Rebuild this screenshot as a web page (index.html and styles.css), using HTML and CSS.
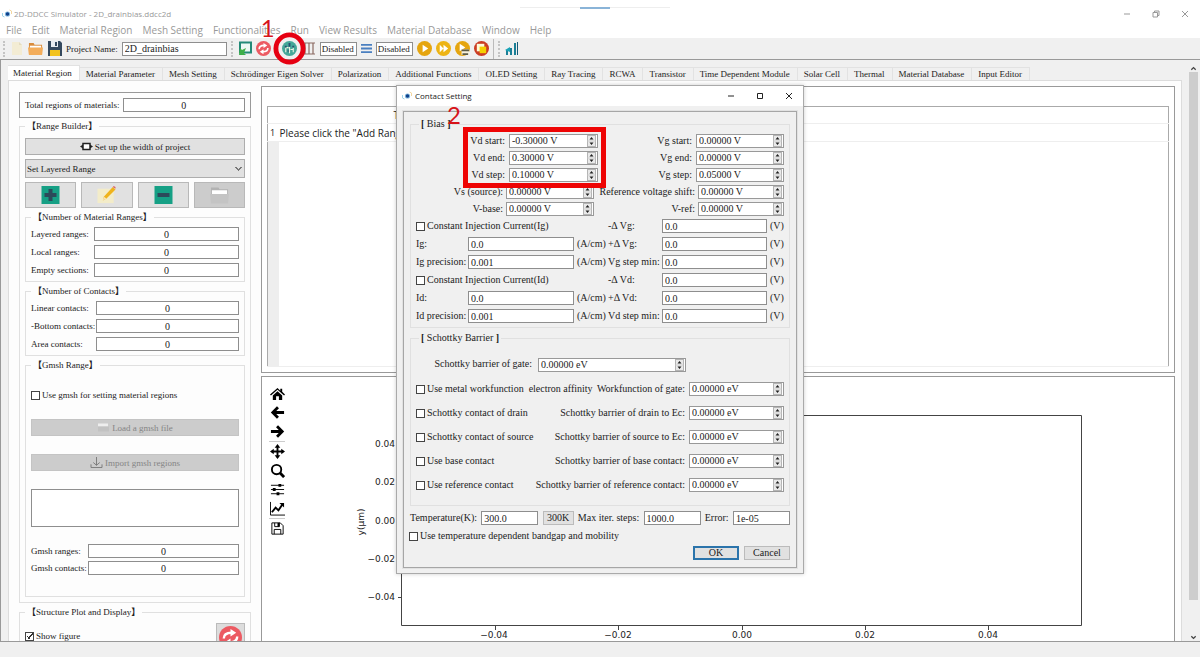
FILE: index.html
```html
<!DOCTYPE html>
<html lang="en">
<head>
<meta charset="utf-8">
<title>2D-DDCC Simulator</title>
<link rel="stylesheet" href="styles.css">
</head>
<body>
<svg class="defs" aria-hidden="true">
  <symbol id="logo" viewBox="0 0 12 10"><path d="M1 4v3l2 1" fill="none" stroke="#9fd4e8"/><circle cx="6" cy="5" r="2.6" fill="#7fb6dc"/><circle cx="6" cy="5" r="1.7" fill="#10408a"/><path d="M8 1l2 1v3" fill="none" stroke="#f3d7a0"/></symbol>
  <symbol id="spin" viewBox="0 0 9 12"><rect x=".5" y=".5" width="8" height="11" fill="#e9e9e9" stroke="#b4b4b4"/><path d="M.5 6h8" stroke="#d0d0d0"/><path d="M2.5 4.5l2-2.5 2 2.5zM2.5 7.500l2 2.500 2-2.500z" fill="#222"/></symbol>
  <symbol id="refresh" viewBox="0 0 24 24"><circle cx="12" cy="12" r="12" fill="#ec5a62"/><path d="M5 13c0-4 3-6 8-6M19 11c0 4-3 6-8 6" fill="none" stroke="#fff" stroke-width="2.500"/><path d="M12 3l6 4-6 4zM12 13l-6 4 6 4z" fill="#fff"/></symbol>
  <symbol id="folder" viewBox="0 0 16 14"><path d="M1 13V1h5l1 2h8v10z" fill="#d98b3a"/><path d="M2 4h12v3H2z" fill="#fff"/><path d="M0 6h16l-1 8H1z" fill="#f3ad5b"/></symbol>
</svg>

<header class="titlebar">
  <div class="caption"><svg class="logo"><use href="#logo"/></svg><span>2D-DDCC Simulator - 2D_drainbias.ddcc2d</span></div>
  <div class="grip"><span></span></div>
  <div class="window-buttons">
    <button aria-label="Minimize"><svg viewBox="0 0 8 8"><path d="M1 4h6"/></svg></button>
    <button aria-label="Restore"><svg viewBox="0 0 8 8"><path d="M1 2.500h4.500V7H1zM2.500 2.500V1H7v4.500H5.500"/></svg></button>
    <button aria-label="Close"><svg viewBox="0 0 8 8"><path d="M1 1l6 6M7 1L1 7"/></svg></button>
  </div>
</header>

<nav class="menubar">
  <button>File</button><button>Edit</button><button>Material Region</button><button>Mesh Setting</button><button>Functionalities</button><button>Run</button><button>View Results</button><button>Material Database</button><button>Window</button><button>Help</button>
</nav>

<div class="toolbar">
  <span class="handle"></span>
  <button aria-label="New"><svg viewBox="0 0 15 15"><path d="M3 1h7l3 3v10H3z" fill="#f3ecd4"/><path d="M10 1v3h3z" fill="#e4dcc0"/></svg></button>
  <button aria-label="Open"><svg viewBox="0 0 16 14"><use href="#folder"/></svg></button>
  <button aria-label="Save"><svg viewBox="0 0 15 15"><path d="M1 0h12l2 2v13H1z" fill="#34495e"/><path d="M4 0h7v6H4z" fill="#e8ecf0"/><path d="M8 1h2v4H8z" fill="#34495e"/><path d="M3 9h10v6H3z" fill="#f2c21c"/></svg></button>
  <label for="project">Project Name:</label>
  <input id="project" class="project" value="2D_drainbias">
  <span class="handle"></span>
  <button aria-label="Load region"><svg viewBox="0 0 15 15"><rect x="3" y="1.500" width="11" height="10" fill="#eef8f4" stroke="#238a78" stroke-width="2"/><path d="M2 14l1-7 2 2 4-2-2 5 2 2z" fill="#3fae49"/></svg></button>
  <button aria-label="Refresh"><svg viewBox="0 0 24 24"><use href="#refresh"/></svg></button>
  <button aria-label="Contact setting" class="contact"><svg viewBox="0 0 16 16"><circle cx="8" cy="8" r="8" fill="#45a899"/><path d="M4 12V7M8 13V6M12 12V7M4 7h3M9 9h3" stroke="#e8f2e0" stroke-width="1.200" fill="none"/><path d="M7 2h2v4H7zM3 5h2v2H3zM11 5h2v2h-2zM6 9h1v3H6z" fill="#284e70"/></svg>
    <svg class="ring" viewBox="0 0 34 34"><circle cx="17" cy="17" r="14" fill="none" stroke="#e60012" stroke-width="5"/></svg><span class="step step-one">1</span></button>
  <button aria-label="Boundary"><svg viewBox="0 0 15 15"><path d="M2 2h12M2 13h12M4 2v11M8 2v11M12 2v11" stroke="#8b6a62" stroke-width="1.200"/></svg></button>
  <input class="state" aria-label="Boundary state" value="Disabled">
  <button aria-label="Layers"><svg class="narrow" viewBox="2 0 12 15"><path d="M2 3.500h12M2 7.500h12M2 11.500h12" stroke="#4a7fc0" stroke-width="2"/></svg></button>
  <input class="state" aria-label="Layer state" value="Disabled">
  <button aria-label="Run"><svg viewBox="0 0 16 16"><circle cx="8" cy="8" r="8" fill="#e5a50f"/><path d="M6 4l6 4-6 4z" fill="#fff"/></svg></button>
  <button aria-label="Run all"><svg viewBox="0 0 16 16"><circle cx="8" cy="8" r="8" fill="#edb414"/><path d="M4 4l4 4-4 4zM8 4l5 4-5 4z" fill="#fff"/></svg></button>
  <button aria-label="Run and save"><svg viewBox="0 0 16 16"><circle cx="8" cy="8" r="8" fill="#e5a50f"/><path d="M5 3l6 4-6 4z" fill="#fff"/><path d="M7 9h8v6H7z" fill="#f7f1dc"/><path d="M7 9h8v2H7zM8 13h6v2H8z" fill="#5c5b45"/></svg></button>
  <button aria-label="Stop"><svg viewBox="0 0 16 16"><circle cx="8" cy="8" r="8" fill="#cb3d24"/><path d="M3 3h8v8H3z" fill="#fffbd8"/><path d="M6 6h7v7H6z" fill="#f5d000"/></svg></button>
  <span class="divider"></span>
  <span class="handle"></span>
  <button aria-label="Plot"><svg viewBox="0 0 15 15"><path d="M2 14V9h2v5zM6 14V7h2v7zM10 14V2h2v12z" fill="#1b7f96"/><path d="M13 14V1h1v13z" fill="#155a78"/><path d="M1 9l5-3v5z" fill="#19a3b8"/></svg></button>
</div>

<main class="workspace">
  <div class="content">
    <div class="tabs" role="tablist">
      <button class="active">Material Region</button><button>Material Parameter</button><button>Mesh Setting</button><button>Schrödinger Eigen Solver</button><button>Polarization</button><button>Additional Functions</button><button>OLED Setting</button><button>Ray Tracing</button><button>RCWA</button><button>Transistor</button><button>Time Dependent Module</button><button>Solar Cell</button><button>Thermal</button><button>Material Database</button><button>Input Editor</button>
    </div>
    <div class="pane">
      <aside class="sidebar">
        <div class="total"><label for="total">Total regions of materials:</label><input id="total" value="0"></div>
        <fieldset class="builder">
          <legend><b>【</b>Range Builder<b>】</b></legend>
          <button class="push"><svg class="wide-icon" viewBox="0 0 13 8"><rect x="3" y="1" width="7" height="6" fill="#fff" stroke="#222" stroke-width="1.500"/><path d="M0 4l3-2v4zM13 4l-3-2v4z" fill="#222"/></svg>Set up the width of project</button>
          <select aria-label="Range type"><option>Set Layered Range</option></select>
          <div class="actions">
            <button aria-label="Add"><svg viewBox="0 0 18 18"><path d="M0 0h18v18H0z" fill="#16a085"/><path d="M7 3h4v4h4v4h-4v4H7v-4H3V7h4z" fill="#2c4a5a"/></svg></button>
            <button aria-label="Edit"><svg viewBox="0 0 20 20"><path d="M0 3h18v16H0z" fill="#f3ecc9"/><path d="M6 16l1-4L17 1l3 3L10 14z" fill="#efb31c"/><path d="M6 16l1-4 3 2z" fill="#f7e3b5"/><path d="M17 1l1-1 2 1v2z" fill="#d9646c"/></svg></button>
            <button aria-label="Remove"><svg viewBox="0 0 18 18"><path d="M0 0h18v18H0z" fill="#16a085"/><path d="M3 7h12v4H3z" fill="#2c4a5a"/></svg></button>
            <button aria-label="Folder" class="off" disabled><svg viewBox="0 0 20 18"><path d="M1 9V1h8l1 2h9v6z" fill="#b2b2b2"/><path d="M2 4h16v5H2z" fill="#fff"/><path d="M0 8h20l-1 10H1z" fill="#c4c4c4"/></svg></button>
          </div>
          <fieldset class="counts">
            <legend><b>【</b>Number of Material Ranges<b>】</b></legend>
            <label for="c1">Layered ranges:</label><input id="c1" value="0">
            <label for="c2">Local ranges:</label><input id="c2" value="0">
            <label for="c3">Empty sections:</label><input id="c3" value="0">
          </fieldset>
          <fieldset class="counts contacts">
            <legend><b>【</b>Number of Contacts<b>】</b></legend>
            <label for="c4">Linear contacts:</label><input id="c4" value="0">
            <label for="c5">-Bottom contacts:</label><input id="c5" value="0">
            <label for="c6">Area contacts:</label><input id="c6" value="0">
          </fieldset>
          <fieldset class="gmsh">
            <legend><b>【</b>Gmsh Range<b>】</b></legend>
            <label class="check"><input type="checkbox">Use gmsh for setting material regions</label>
            <button class="push off" disabled><svg class="wide-icon" viewBox="0 0 13 10"><path d="M1 1h10v3H1z" fill="#eee"/><path d="M1 4h11v5H1z" fill="#c2c2c2"/></svg>Load a gmsh file</button>
            <button class="push off" disabled><svg class="wide-icon" viewBox="0 0 13 12"><path d="M.5 8v3.500h12V8M6.500 0v9M3 6l3.500 3L10 6" fill="none" stroke="#777"/></svg>Import gmsh regions</button>
            <textarea aria-label="Gmsh regions"></textarea>
            <div class="counts-grid">
              <label for="c7">Gmsh ranges:</label><input id="c7" value="0">
              <label for="c8">Gmsh contacts:</label><input id="c8" value="0">
            </div>
          </fieldset>
        </fieldset>
        <fieldset class="structure">
          <legend><b>【</b>Structure Plot and Display<b>】</b></legend>
          <label class="check"><input type="checkbox" checked>Show figure</label>
          <button aria-label="Redraw figure"><svg viewBox="0 0 24 24"><use href="#refresh"/></svg></button>
        </fieldset>
      </aside>

      <section class="views">
        <div class="frame table-frame">
          <table>
            <thead><tr><th></th><th class="head">T</th></tr></thead>
            <tbody><tr><th>1</th><td>Please click the "Add Range</td></tr><tr class="rest"><th></th><td></td></tr></tbody>
          </table>
        </div>
        <div class="frame plot-frame">
          <div class="plot-tools">
            <button aria-label="Home"><svg viewBox="0 0 16 16"><path d="M8 2L0 9l1 1 7-6 7 6 1-1-3-3V3h-2v2z"/><path d="M3 10l5-4.500L13 10v5H9.500v-4h-3v4H3z"/></svg></button>
            <button aria-label="Back"><svg viewBox="0 0 16 16"><path d="M15 8H3M8.500 2.500L3 8l5.500 5.500" class="thick"/></svg></button>
            <button aria-label="Forward"><svg viewBox="0 0 16 16"><path d="M1 8h12M7.500 2.500L13 8l-5.500 5.500" class="thick"/></svg></button>
            <hr>
            <button aria-label="Pan"><svg viewBox="0 0 16 16"><path d="M8 2v12M2 8h12" class="mid"/><path d="M8 0l3 4H5zM8 16l3-4H5zM0 8l4-3v6zM16 8l-4-3v6z"/></svg></button>
            <button aria-label="Zoom"><svg viewBox="0 0 16 16"><circle cx="7" cy="7" r="5" class="mid"/><path d="M10.500 10.500L15 15" class="thick"/></svg></button>
            <button aria-label="Subplots"><svg viewBox="0 0 16 16"><path d="M1 3.500h14M1 8h14M1 12.500h14" class="thin"/><path d="M9 2h3v3H9zM3 6.500h3v3H3zM7 11h3v3H7z"/></svg></button>
            <button aria-label="Axes"><svg viewBox="0 0 16 16"><path d="M.5 1v14H16" class="thin"/><path d="M2 12l4-5 3 3 4-6" class="mid"/><path d="M10 2h5v5z"/></svg></button>
            <hr>
            <button aria-label="Save figure"><svg viewBox="0 0 16 16"><path d="M2 2h9l3 3v9H2zM4.500 14V9h7v5M5 2v4h5V2" class="thin"/><path d="M8 2h2v4H8z"/></svg></button>
          </div>
          <svg class="plot" viewBox="0 0 884 264" preserveAspectRatio="xMinYMin meet">
            <path d="M111.500 38.500h680v210h-680z" fill="none" stroke="#444"/>
            <path d="M108 67.500h4M108 106.500h4M108 144.500h4M108 182.500h4M108 220.500h4M205.500 249v4M328.500 249v4M452.500 249v4M575.500 249v4M698.500 249v4" stroke="#444"/>
            <g text-anchor="end"><text x="105" y="70">0.04</text><text x="105" y="108">0.02</text><text x="105" y="147">0.00</text><text x="105" y="185">−0.02</text><text x="105" y="223">−0.04</text></g>
            <g text-anchor="middle"><text x="204" y="261">−0.04</text><text x="328" y="261">−0.02</text><text x="452" y="261">0.00</text><text x="575" y="261">0.02</text><text x="698" y="261">0.04</text><text transform="translate(74 145) rotate(-90)">y(μm)</text></g>
          </svg>
        </div>
      </section>
    </div>
  </div>
  <div class="scrollbar"><svg viewBox="0 0 8 8"><path d="M1.500 5.500L4 3l2.500 2.500"/></svg><span></span><svg viewBox="0 0 8 8"><path d="M1.500 2.500L4 5l2.500-2.500"/></svg></div>
</main>
<footer class="statusbar"></footer>

<div class="dialog" role="dialog" aria-label="Contact Setting">
  <div class="dialog-title">
    <svg class="logo"><use href="#logo"/></svg><span>Contact Setting</span>
    <div class="window-buttons">
      <button aria-label="Minimize"><svg viewBox="0 0 8 8"><path d="M1 4h6"/></svg></button>
      <button aria-label="Maximize"><svg viewBox="0 0 8 8"><path d="M1.500 1.500h5v5h-5z"/></svg></button>
      <button aria-label="Close"><svg viewBox="0 0 8 8"><path d="M1 1l6 6M7 1L1 7"/></svg></button>
    </div>
  </div>
  <form class="dialog-body">
    <fieldset class="bias">
      <legend><b>[</b> Bias <b>]</b></legend>
      <div class="spins">
        <label for="vds">Vd start:</label><span class="spin"><input id="vds" value="-0.30000 V"><svg><use href="#spin"/></svg></span>
        <label for="vgs">Vg start:</label><span class="spin"><input id="vgs" value="0.00000 V"><svg><use href="#spin"/></svg></span>
        <label for="vde">Vd end:</label><span class="spin"><input id="vde" value="0.30000 V"><svg><use href="#spin"/></svg></span>
        <label for="vge">Vg end:</label><span class="spin"><input id="vge" value="0.00000 V"><svg><use href="#spin"/></svg></span>
        <label for="vdp">Vd step:</label><span class="spin"><input id="vdp" value="0.10000 V"><svg><use href="#spin"/></svg></span>
        <label for="vgp">Vg step:</label><span class="spin"><input id="vgp" value="0.05000 V"><svg><use href="#spin"/></svg></span>
      </div>
      <div class="spins source">
        <label for="vs">Vs (source):</label><span class="spin"><input id="vs" value="0.00000 V"><svg><use href="#spin"/></svg></span>
        <label for="rvs">Reference voltage shift:</label><span class="spin"><input id="rvs" value="0.00000 V"><svg><use href="#spin"/></svg></span>
        <label for="vb">V-base:</label><span class="spin"><input id="vb" value="0.00000 V"><svg><use href="#spin"/></svg></span>
        <label for="vr">V-ref:</label><span class="spin"><input id="vr" value="0.00000 V"><svg><use href="#spin"/></svg></span>
      </div>
      <div class="currents">
        <label class="check wide"><input type="checkbox">Constant Injection Current(Ig)</label>
        <label for="mg">-Δ Vg:</label><input id="mg" value="0.0"><span>(V)</span>
        <label for="ig">Ig:</label><input id="ig" value="0.0"><span>(A/cm)</span>
        <label for="pg">+Δ Vg:</label><input id="pg" value="0.0"><span>(V)</span>
        <label for="igp">Ig precision:</label><input id="igp" value="0.001"><span>(A/cm)</span>
        <label for="gm">Vg step min:</label><input id="gm" value="0.0"><span>(V)</span>
        <label class="check wide"><input type="checkbox">Constant Injection Current(Id)</label>
        <label for="md">-Δ Vd:</label><input id="md" value="0.0"><span>(V)</span>
        <label for="idc">Id:</label><input id="idc" value="0.0"><span>(A/cm)</span>
        <label for="pd">+Δ Vd:</label><input id="pd" value="0.0"><span>(V)</span>
        <label for="idp">Id precision:</label><input id="idp" value="0.001"><span>(A/cm)</span>
        <label for="dm">Vd step min:</label><input id="dm" value="0.0"><span>(V)</span>
      </div>
    </fieldset>
    <fieldset class="barrier">
      <legend><b>[</b> Schottky Barrier <b>]</b></legend>
      <div class="gate"><label for="sg">Schottky barrier of gate:</label><span class="spin"><input id="sg" value="0.00000 eV"><svg><use href="#spin"/></svg></span></div>
      <div class="barrier-row"><label class="check"><input type="checkbox">Use metal workfunction&nbsp; electron affinity</label><label for="b1">Workfunction of gate:</label><span class="spin"><input id="b1" value="0.00000 eV"><svg><use href="#spin"/></svg></span></div>
      <div class="barrier-row"><label class="check"><input type="checkbox">Schottky contact of drain</label><label for="b2">Schottky barrier of drain to Ec:</label><span class="spin"><input id="b2" value="0.00000 eV"><svg><use href="#spin"/></svg></span></div>
      <div class="barrier-row"><label class="check"><input type="checkbox">Schottky contact of source</label><label for="b3">Schottky barrier of source to Ec:</label><span class="spin"><input id="b3" value="0.00000 eV"><svg><use href="#spin"/></svg></span></div>
      <div class="barrier-row"><label class="check"><input type="checkbox">Use base contact</label><label for="b4">Schottky barrier of base contact:</label><span class="spin"><input id="b4" value="0.00000 eV"><svg><use href="#spin"/></svg></span></div>
      <div class="barrier-row"><label class="check"><input type="checkbox">Use reference contact</label><label for="b5">Schottky barrier of reference contact:</label><span class="spin"><input id="b5" value="0.00000 eV"><svg><use href="#spin"/></svg></span></div>
    </fieldset>
    <div class="temperature">
      <label for="tk">Temperature(K):</label><input id="tk" value="300.0"><button type="button" class="small">300K</button>
      <label for="mi">Max iter. steps:</label><input id="mi" value="1000.0">
      <label for="er">Error:</label><input id="er" value="1e-05">
    </div>
    <label class="check"><input type="checkbox">Use temperature dependent bandgap and mobility</label>
    <div class="buttons"><button type="button" class="primary">OK</button><button type="button">Cancel</button></div>
  </form>
  <div class="highlight"></div>
  <span class="step step-two">2</span>
</div>
</body>
</html>
```

FILE: styles.css
```css
* { box-sizing: border-box; }
body {
  margin: 0;
  height: 100vh;
  display: flex;
  flex-direction: column;
  overflow: hidden;
  position: relative;
  background: #fff;
  color: #222;
  font: 9px/12px "Liberation Serif", "Noto Sans CJK TC", serif;
}
button, input, select, textarea { font: inherit; color: inherit; margin: 0; }
button { border: 0; padding: 0; background: none; white-space: nowrap; }
input, textarea { border: 1px solid #8e8e8e; border-radius: 0; background: #fff; min-width: 0; }
input { height: 14px; padding: 0 2px; font-size: 10px; line-height: 12px; }
label, span { white-space: nowrap; }
fieldset { margin: 0; min-width: 0; border: 1px solid #e0e0e0; }
legend { padding: 0 2px; line-height: 12px; }
legend b { font-weight: 700; }
svg { display: block; }
.defs { position: absolute; width: 0; height: 0; }

/* Title bar and menu */
.titlebar {
  display: grid;
  grid-template-columns: 1fr 150px 1fr;
  height: 22px;
  padding: 7px 11px 0 1px;
  color: #999;
  font-family: "Open Sans", "Noto Sans", sans-serif;
  font-size: 8px;
}
.caption { display: flex; align-items: center; height: 14px; }
.logo { width: 13px; height: 10px; }
.grip { border-top: 1px solid #eee; display: flex; justify-content: center; }
.grip span { width: 30px; height: 2px; margin-top: -1px; background: #8ab4d8; }
.window-buttons { display: flex; justify-content: flex-end; align-items: center; gap: 21px; height: 14px; }
.window-buttons svg { width: 8px; height: 8px; fill: none; stroke: #999; stroke-width: 1; }
.menubar {
  display: flex;
  gap: 10px;
  height: 16px;
  padding-left: 6px;
  color: #999;
  font: 10px/16px "Open Sans", "Noto Sans", sans-serif;
}

/* Toolbar */
.toolbar {
  display: flex;
  align-items: center;
  gap: 4px;
  height: 22px;
  padding: 0 3px;
  background: #f0f0f0;
  border-bottom: 1px solid #999;
}
.toolbar button svg { width: 15px; height: 15px; }
.toolbar button .narrow { width: 11px; }
.toolbar .handle { height: 16px; border-left: 2px dotted #c4c4c4; }
.toolbar .divider { height: 20px; border-left: 1px solid #bbb; }
.project { width: 105px; }
.state { width: 37px; padding: 0 1px; font-size: 9px; }
.contact { position: relative; margin-left: 7px; }
.toolbar .ring { position: absolute; z-index: 1; left: -9px; top: -9px; width: 33px; height: 33px; }
.step { position: absolute; color: #d7141a; font: 24px/28px Lato, sans-serif; }
.step-one { left: -21px; top: -27px; }

/* Workspace */
.workspace {
  flex: 1;
  min-height: 0;
  display: flex;
  gap: 7px;
  padding: 5px 2px 0 7px;
  overflow: hidden;
  background: #f0f0f0;
  border-left: 1px solid #999;
  border-bottom: 1px solid #999;
}
.statusbar { height: 15px; background: #f0f0f0; }
.content { flex: 1; min-width: 0; display: flex; flex-direction: column; }
.tabs { display: flex; align-items: flex-end; height: 15px; }
.tabs button { height: 13px; padding: 0 7px 0 6px; border: 1px solid #e2e2e2; border-width: 1px 1px 0 0; line-height: 12px; }
.tabs .active { height: 15px; padding: 0 7px 0 5px; background: #fff; }
.pane {
  flex: 1;
  min-height: 0;
  display: flex;
  gap: 10px;
  padding: 5px 6px 0 10px;
  overflow: hidden;
  background: #fdfdfd;
  border: 1px solid #dcdcdc;
  border-bottom: 0;
}
.scrollbar { width: 9px; display: flex; flex-direction: column; justify-content: space-between; }
.scrollbar span { flex: 1; margin-bottom: 34px; background: #cdcdcd; }
.scrollbar svg { width: 9px; height: 7px; fill: none; stroke: #444; stroke-width: 1.5; }

/* Sidebar */
.sidebar { width: 232px; flex: none; padding-top: 6px; }
.sidebar input:not([type=checkbox]) { text-align: center; width: 100%; }
.total { display: flex; align-items: center; gap: 3px; height: 26px; padding: 0 5px; border: 1px solid #999; }
.builder, .structure { padding: 0 5px; margin-top: 2px; }
.builder { padding-bottom: 5px; }
.push {
  display: flex;
  align-items: center;
  justify-content: center;
  gap: 2px;
  width: 100%;
  height: 17px;
  background: #e1e1e1;
  border: 1px solid #adadad;
}
.builder > .push { margin-top: 6px; }
.wide-icon { width: 13px; height: 11px; }
.off, .push.off { background: #ccc; border-color: #c4c4c4; color: #858585; }
select {
  appearance: none;
  display: block;
  width: 100%;
  height: 19px;
  margin-top: 4px;
  padding: 0 1px;
  border: 1px solid #adadad;
  border-radius: 0;
  background:
    linear-gradient(45deg, transparent 50%, #777 50%, #777 65%, transparent 65%) right 5px center / 4px 4px no-repeat,
    linear-gradient(-45deg, transparent 50%, #777 50%, #777 65%, transparent 65%) right 2px center / 4px 4px no-repeat,
    #e1e1e1;
}
.actions { display: grid; grid-template-columns: repeat(4, 1fr); gap: 5px; margin-top: 4px; }
.actions button { display: grid; place-items: center; height: 26px; background: #e1e1e1; border: 1px solid #b8b8b8; }
.actions .off { background: #ccc; }
.actions svg { width: 19px; height: 18px; }
.builder fieldset { padding: 0 5px; margin-top: 3px; }
.counts, .counts-grid { display: grid; grid-template-columns: 60px 1fr; gap: 4px 3px; align-items: center; }
.builder .counts { padding-bottom: 4px; padding-top: 4px; }
.builder .contacts { grid-template-columns: 64px 1fr; column-gap: 1px; }
.check { display: flex; align-items: center; gap: 2px; }
.check input, .check input[type=checkbox] {
  appearance: none;
  flex: none;
  width: 9px;
  height: 9px;
  padding: 0;
  border: 1px solid #444;
}
.check input:checked {
  background: linear-gradient(-45deg, transparent 45%, #333 45%, #333 60%, transparent 60%) right / 5px 6px no-repeat,
    linear-gradient(45deg, transparent 40%, #333 40%, #333 60%, transparent 60%) left 1px bottom 1px / 3px 3px no-repeat;
}
.gmsh .check { margin-top: 18px; }
.gmsh .push { margin-top: 18px; }
textarea { display: block; width: 100%; height: 38px; margin-top: 18px; resize: none; }
.gmsh .counts-grid { grid-template-columns: 54px 1fr; row-gap: 3px; margin: 17px 0 21px; }
.structure { height: 60px; display: flex; justify-content: space-between; align-items: flex-start; margin-top: 3px; }
.structure .check { margin-top: 12px; }
.structure button { width: 29px; height: 29px; padding: 2px; margin-top: 5px; background: #ddd; border: 1px solid #bbb; }

/* Views */
.views { flex: 1; min-width: 0; display: flex; flex-direction: column; gap: 3px; }
.frame { border: 1px solid #999; background: #fff; }
.table-frame { flex: none; padding: 19px 5px 5px; }
table { width: 100%; height: 261px; border: 1px solid #aaa; border-collapse: collapse; table-layout: fixed; font: 10px/16px "Open Sans", sans-serif; }
thead tr { height: 17px; }
tbody tr { height: 18px; }
tbody .rest { height: auto; }
th, td { padding: 0 1px; text-align: left; font-weight: 400; white-space: nowrap; border-bottom: 1px solid #eee; }
th:first-child { width: 11px; padding-left: 2px; font-size: 9px; }
.rest th { background: #eee; }
.head { padding-left: 115px; }
.plot-frame { flex: 1; display: flex; min-height: 0; overflow: hidden; border-bottom: 0; }
.plot-tools { width: 28px; flex: none; display: flex; flex-direction: column; align-items: center; gap: 4px; padding: 9px 0 0 2px; }
.plot-tools svg { width: 15px; height: 15px; }
.plot-tools hr { width: 16px; margin: -2px 0; border: 0; border-top: 1px solid #ccc; }
.plot-tools .thick, .plot-tools .mid, .plot-tools .thin { fill: none; stroke: #000; stroke-width: 3; }
.plot-tools .mid { stroke-width: 2; }
.plot-tools .thin { stroke-width: 1; }
.plot { flex: 1; min-width: 0; height: auto; align-self: flex-start; fill: #222; font: 9px "DejaVu Sans", sans-serif; }

/* Dialog window */
.dialog {
  position: absolute;
  left: 396px;
  top: 85px;
  width: 408px;
  background: #f0f0f0;
  border: 1px solid #aaa;
  box-shadow: 0 0 4px rgba(0, 0, 0, .2);
  font-size: 10px;
}
.dialog-title {
  display: flex;
  align-items: center;
  gap: 1px;
  height: 20px;
  padding: 0 10px 0 4px;
  background: #fff;
  font: 8px/20px "Open Sans", sans-serif;
}
.dialog-title .window-buttons { margin-left: auto; }
.dialog-title .window-buttons svg { stroke: #222; }
.dialog-body { margin: 5px 6px; padding: 6px 6px 7px; border: 1px solid #a6a6a6; outline: 1px solid #e2e2e2; }
.dialog fieldset { padding: 0 5px; }
.dialog legend { margin-left: 3px; }
.spins { display: grid; grid-template-columns: 89px 89px 1fr 88px; gap: 3px 4px; margin-top: 4px; }
.spins label { text-align: right; line-height: 14px; }
.spins.source { grid-template-columns: 87px 88px 1fr 86px; column-gap: 3px; margin-top: 3px; }
.spin { display: flex; align-items: center; height: 14px; padding-right: 1px; background: #fff; border: 1px solid #999; }
.spin input { flex: 1; width: 0; height: 12px; border: 0; }
.spin svg { width: 9px; height: 12px; }
.currents { display: grid; grid-template-columns: 52px 106px 34px 54px 105px 1fr; align-items: center; row-gap: 4px; margin: 3px 0 4px; }
.currents span { padding-left: 3px; }
.currents .wide { grid-column: span 3; }
.barrier { margin-top: 4px; }
.gate { display: grid; grid-template-columns: 116px 148px; gap: 6px; margin-top: 14px; }
.gate label { text-align: right; }
.barrier-row { display: grid; grid-template-columns: auto 1fr 95px; gap: 4px; align-items: center; margin-top: 10px; }
.barrier-row > label:nth-child(2) { text-align: right; }
.dialog .barrier { padding-bottom: 13px; }
.temperature { display: flex; align-items: center; justify-content: space-between; margin: 5px 0 5px; }
.temperature input { width: 57px; }
.dialog-body > .check { margin-left: -1px; }
.buttons { display: flex; justify-content: flex-end; gap: 5px; margin-top: 4px; }
.buttons button, .small { width: 46px; height: 14px; background: #e1e1e1; border: 1px solid #bbb; }
.small { width: 31px; }
.buttons .primary { border: 2px solid #2b74ab; line-height: 10px; }
.highlight { position: absolute; left: 66px; top: 41px; width: 143px; height: 61px; border: 5px solid #ee0404; pointer-events: none; }
.step-two { left: 50px; top: 15px; }
```
